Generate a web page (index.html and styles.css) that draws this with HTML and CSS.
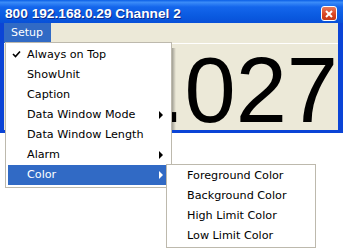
FILE: index.html
```html
<!DOCTYPE html>
<html lang="en">
<head>
  <meta charset="UTF-8" />
  <title>800 192.168.0.29 Channel 2</title>
  <link rel="stylesheet" href="styles.css">
</head>
<body>
  <div class="window">
    <div class="titlebar">
      <span class="title">800 192.168.0.29 Channel 2</span>
      <span class="close-btn">
        <svg width="8" height="8" viewBox="0 0 8 8"><path d="M1 1 L7 7 M7 1 L1 7" stroke="#fff" stroke-width="2" /></svg>
      </span>
    </div>
    <div class="frame">
      <div class="menubar">
        <span class="menubar-item active">Setup</span>
      </div>
      <div class="display">
        <span class="value">1.027</span>
        <span class="menu-shadow"></span>
      </div>
    </div>
  </div>

  <!-- Setup dropdown -->
  <ul class="menu main-menu">
    <li class="menu-item checked">
      <svg class="check" width="9" height="9" viewBox="0 0 9 9"><path d="M1 4 L3.5 6.5 L8 1.5" fill="none" stroke="#000" stroke-width="1.6" /></svg>
      Always on Top
    </li>
    <li class="menu-item">ShowUnit</li>
    <li class="menu-item">Caption</li>
    <li class="menu-item has-sub">Data Window Mode</li>
    <li class="menu-item">Data Window Length</li>
    <li class="menu-item has-sub">Alarm</li>
    <li class="menu-item has-sub selected">Color</li>
  </ul>

  <!-- Color submenu -->
  <ul class="menu sub-menu">
    <li class="menu-item">Foreground Color</li>
    <li class="menu-item">Background Color</li>
    <li class="menu-item">High Limit Color</li>
    <li class="menu-item">Low Limit Color</li>
  </ul>
</body>
</html>
```

FILE: styles.css
```css
* { margin: 0; padding: 0; box-sizing: border-box; }
body {
  background-color: #fff;
  font-family: 'DejaVu Sans', sans-serif;
  font-size: 11px;
  width: 343px;
  height: 251px;
  overflow: hidden;
}
.window {
  width: 343px;
  background-color: #0b44d6;
}
.titlebar {
  height: 23px;
  padding: 6px 5px 0;
  display: flex;
  justify-content: space-between;
  background: linear-gradient(to bottom, #0a5ee6 0%, #3b8cf8 10%, #1466ec 30%, #0a5ae0 70%, #0850d8 100%);
}
.title {
  color: white;
  font-family: 'Liberation Sans', sans-serif;
  font-weight: bold;
  font-size: 13.7px;
  line-height: 16px;
  text-shadow: 1px 1px 0 #0a2a8a;
}
.close-btn {
  width: 16px;
  height: 15px;
  margin-right: 1px;
  border: 1px solid #fff;
  border-radius: 3px;
  background: linear-gradient(to bottom, #e87a5c, #d8431f 60%, #c53a18);
  display: flex;
  align-items: center;
  justify-content: center;
}
.frame {
  margin: 0 5px 0 4px;
  padding-bottom: 3px;
  background-color: #0b44d6;
}
.menubar {
  height: 21px;
  background-color: #ece9d8;
  border-bottom: 1px solid #fff;
  display: flex;
}
.menubar-item {
  height: 20px;
  line-height: 20px;
  padding: 0 8px 0 7px;
  color: #000;
}
.menubar-item.active {
  background-color: #316ac5;
  color: #fff;
}
.display {
  position: relative;
  height: 86px;
  overflow: hidden;
  background-color: #ece9d8;
  text-align: right;
}
.value {
  font-family: 'Liberation Sans', sans-serif;
  font-size: 92px;
  line-height: 92px;
  color: #000;
}
.menu-shadow {
  position: absolute;
  left: 167px;
  top: 4px;
  bottom: 0;
  width: 5px;
  background: linear-gradient(to right, rgba(0,0,0,0.4), rgba(0,0,0,0));
}
.menu {
  position: absolute;
  list-style: none;
  background-color: #fff;
  border: 1px solid #bdb9ad;
}
.main-menu {
  left: 5px;
  top: 42px;
  width: 167px;
  padding: 2px;
}
.sub-menu {
  left: 166px;
  top: 164px;
  width: 150px;
  padding: 1px;
}
.menu-item {
  position: relative;
  height: 20px;
  line-height: 20px;
  padding-left: 19px;
  font-size: 11.2px;
  color: #000;
  white-space: nowrap;
}
.menu-item.selected {
  background-color: #316ac5;
  color: #fff;
}
.check {
  position: absolute;
  left: 4px;
  top: 5px;
}
.has-sub::after {
  content: "";
  position: absolute;
  right: 6px;
  top: 6px;
  border-left: 4px solid #000;
  border-top: 4px solid transparent;
  border-bottom: 4px solid transparent;
}
.has-sub.selected::after { border-left-color: #fff; }
```
